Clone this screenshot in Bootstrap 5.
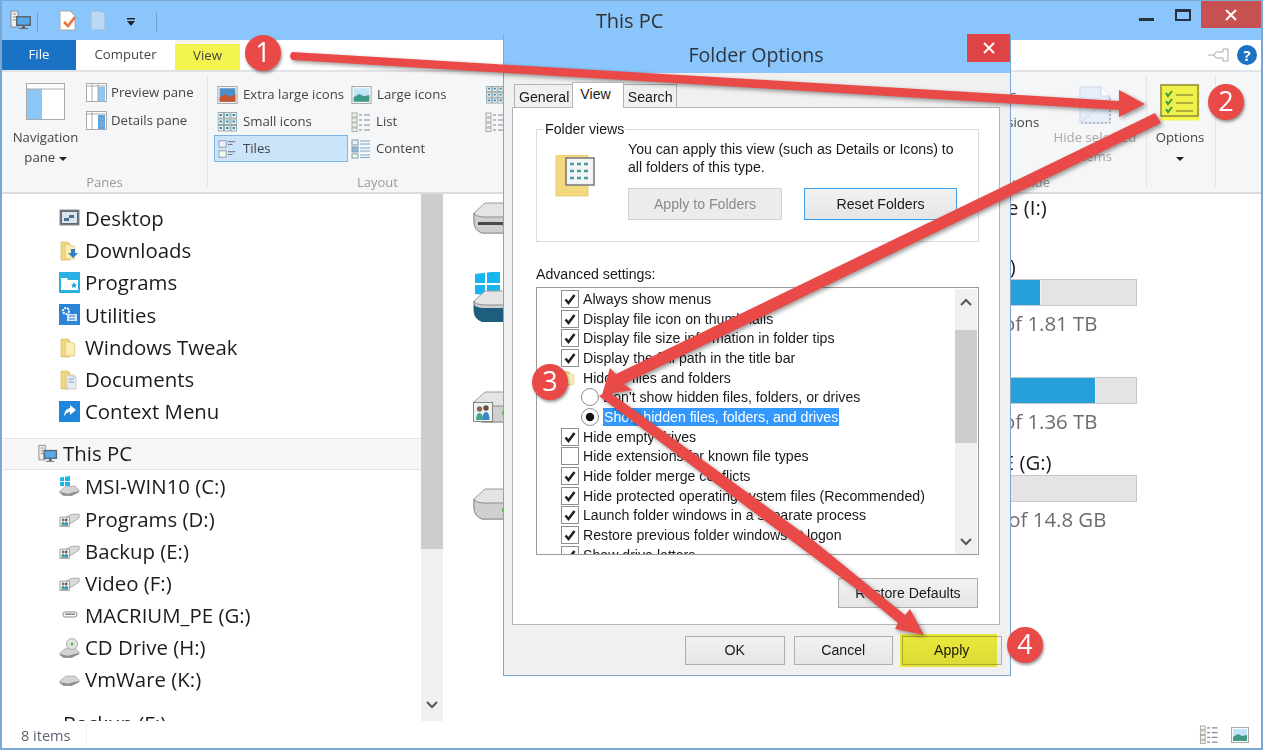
<!DOCTYPE html>
<html lang="en">
<head>
  <meta charset="UTF-8">
  <meta name="viewport" content="width=device-width, initial-scale=1.0">
  <title>Folder Options</title>
  <link rel="stylesheet" href="https://cdn.jsdelivr.net/npm/bootstrap@5.3.0/dist/css/bootstrap.min.css">
  <style>
    body { width: 1263px; height: 750px; overflow: hidden; background: #fff; font-family: "Open Sans", "Liberation Sans", sans-serif; }
    .win-frame { position: relative; width: 1263px; height: 750px; border: solid #7ba7d3; border-width: 1px 2px 2px; overflow: hidden; }

    /* title bar */
    .win-title { height: 39px; background: #8ac5fb; display: grid; grid-template-columns: 1fr auto 1fr; }
    .win-title h1 { font-size: 20px; font-weight: 400; color: #333; margin: 8px 4px 0 0; }
    .qat { padding: 9px 0 0 8px; gap: 5px; }
    .qat-sep { width: 1px; height: 20px; background: #6e9fcb; margin-top: 2px; }
    .win-btns { justify-content: flex-end; }
    .btn-min { width: 15px; height: 3px; background: #26323d; margin: 17px 21px 0 0; }
    .btn-max { width: 16px; height: 12px; border: 2px solid #26323d; border-top-width: 3px; margin: 8px 10px 0 0; }
    .btn-close-win { width: 60px; height: 27px; background: #c75050; color: #fff; display: flex; align-items: center; justify-content: center; }

    /* ribbon */
    .rb-tabs { height: 31px; background: #fff; align-items: stretch; font-size: 13.2px; }
    .rb-tab { color: #444; display: flex; align-items: center; justify-content: center; }
    .rb-file { width: 74px; background: #1a72c4; color: #fff; }
    .rb-computer { width: 99px; }
    .rb-view { width: 65px; background: #f4f44e; border-top: 4px solid #f4f6ee; color: #444; padding-bottom: 3px; }
    .rb-help { width: 20px; height: 20px; background: #1a72c4; color: #fff; font-size: 15px; font-weight: 700; line-height: 20px; }
    .rb-body { height: 125px; background: #f5f6f7; border-top: 2px solid #e2e3e4; border-bottom: 2px solid #dadbdc; font-size: 13.2px; color: #444; }
    .rb-group { position: relative; border-right: 1px solid #e2e3e4; height: 111px; margin-top: 4px; }
    .rb-label { position: absolute; bottom: -5px; left: 0; right: 0; text-align: center; color: #9a9a9a; font-size: 13px; }
    .rb-panes { width: 206px; }
    .rb-navpane { width: 84px; padding: 7px 2px 0 5px; text-align: center; line-height: 20px; }
    .rb-navpane svg { display: block; margin: 0 0 7px 19px; }
    .rb-panelist { gap: 7px; padding-top: 6px; }
    .rb-small { gap: 4px; align-items: center; height: 21px; }
    .rb-layout { width: 340px; padding: 5px 0 0 6px; }
    .rb-gallery { display: grid; grid-template-columns: 134px 134px 134px; grid-auto-rows: 27px; }
    .rb-cell { display: flex; align-items: center; gap: 5px; padding-left: 3px; white-space: nowrap; }
    .rb-cell-on { background: #cce4f9; border: 1px solid #7fb4e6; }
    .rb-showhide { width: 247px; margin-left: auto; }
    .rb-checks { position: absolute; left: 10px; top: 6px; line-height: 27px; white-space: nowrap; }
    .rb-hide { position: absolute; left: 150px; top: 10px; width: 90px; text-align: center; color: #a8a8a8; line-height: 19px; }
    .rb-options { width: 69px; margin-right: 45px; padding-right: 2px; text-align: center; line-height: 19px; }
    .rb-options svg { display: block; margin: 8px auto 7px; }
    .rb-caret { width: 0; height: 0; border: 4px solid transparent; border-top-color: #222; border-bottom: 0; display: inline-block; }

    /* main area */
    .win-main { height: 527px; background: #fff; }
    .tree { width: 419px; padding-top: 8px; overflow: hidden; font-size: 20.4px; color: #1c1c1c; flex-shrink: 0; }
    .tree-row { height: 32.2px; display: flex; align-items: center; gap: 5px; padding-left: 57px; white-space: nowrap; }
    .tree-pc { height: 32px; margin: 10px 0 1px 1px; padding-left: 35px; background: #f6f6f6; border: solid #e4e4e4; border-width: 1px 0; gap: 5px; }
    .tree-root { margin-top: 11px; padding-left: 61px; }
    .vscroll { width: 22px; background: #f0f0f0; flex-shrink: 0; }
    .vthumb { height: 355px; background: #cdcdcd; }
    .vdown { margin-top: auto; height: 32px; color: #555; display: flex; align-items: center; justify-content: center; }
    .tiles { flex-grow: 1; padding-left: 30px; font-size: 20.4px; color: #1c1c1c; }
    .tile { height: 98px; }
    .tile-first { height: 59px; }
    .tile-ic { flex-shrink: 0; }
    .ic-a { margin-top: 6px; }
    .ic-b { margin-top: 19px; }
    .ic-c { margin-top: 38px; }
    .ic-d { margin-top: 37px; }
    .tile-info { width: 251px; margin-left: auto; margin-right: 124px; line-height: 26px; white-space: nowrap; }
    .tile-name-short { padding-left: 48px; }
    .tile-bar { height: 27px; background: #e4e4e4; border: 1px solid #c8c8c8; }
    .tile-fill { height: 100%; background: #26a0da; border-right: 1px solid #e8f4fb; }
    .tile-free { color: #6d6d6d; margin-top: 4px; }
    .win-status { height: 27px; background: #fff; font-size: 14.5px; color: #5a6472; align-items: center; }
    .st-count { width: 85px; padding-left: 19px; border-right: 1px solid #f0f0f0; height: 22px; line-height: 24px; }

    /* dialog */
    .dlg { position: absolute; left: 501px; top: 33px; width: 508px; height: 642px; background: #f0f0f0; border: 1px solid #7ba7d3; border-top: 0; font-family: "Liberation Sans", Arial, sans-serif; font-size: 14.15px; color: #1a1a1a; }
    .dlg-title { height: 39px; background: #8ac5fb; text-align: center; font-family: "Open Sans", sans-serif; font-size: 19.6px; color: #2d3640; line-height: 42px; position: relative; padding-right: 2px; }
    .dlg-close { position: absolute; top: 0; right: 0; width: 43px; height: 28px; background: #e04343; display: flex; align-items: center; justify-content: center; }
    .dlg-tabs { padding: 9px 0 0 10px; height: 34px; align-items: flex-end; border: 0; flex-wrap: nowrap; }
    .dlg-tab { height: 23px; border: 1px solid #b5b5b5; border-bottom: 0; background: #f0f0f0; padding: 0 3px 0 4px; line-height: 24px; margin-left: -1px; }
    .dlg-tab-on { height: 26px; background: #fff; padding: 0 12px 0 7px; line-height: 22px; position: relative; z-index: 1; margin-bottom: -1px; }
    .dlg-pane { width: 488px; height: 518px; margin-left: 8px; background: #fff; border: 1px solid #b5b5b5; padding: 21px 20px 0 23px; }
    .dlg-views { position: relative; width: 443px; height: 113px; border: 1px solid #dcdcdc; padding: 10px 0 0 18px; }
    .dlg-legend { position: absolute; left: 7px; top: -9px; padding: 0 1px; line-height: 16px; background: #fff; }
    .dlg-views-icon { margin-top: 15px; flex-shrink: 0; }
    .dlg-text { line-height: 18px; }
    .dlg-btn { font-size: 14.15px; height: 32px; border-radius: 0; padding: 0; background: linear-gradient(#f2f2f2, #e5e5e5); border: 1px solid #adadad; color: #1a1a1a; font-family: inherit; }
    .dlg-btn-off:disabled { width: 154px; background: #ececec; border-color: #cfcfcf; color: #8a8a8a; opacity: 1; }
    .dlg-btn-focus { width: 153px; border-color: #3f9ee8; }
    .dlg-btn-gap { gap: 22px; margin-top: 12px; }
    .dlg-btn-gap .dlg-btn, .dlg-restore { padding-top: 2px; }
    .adv-label { margin: 24px 0 0; line-height: 16px; }
    .adv-list { width: 443px; height: 268px; margin-top: 5px; border: 1px solid #9a9a9a; overflow: hidden; padding: 1px 0 0 24px; position: relative; }
    .adv-row { height: 19.7px; display: flex; align-items: center; white-space: nowrap; gap: 4px; line-height: 18px; }
    .adv-sub { padding-left: 20px; }
    .adv-on { background: #3399ff; color: #fff; padding: 0 1px; }
    .adv-box { width: 18px; height: 18px; margin: 0; border: 1px solid #8f8f8f; flex-shrink: 0; background-color: #fff; }
    .adv-box[type=checkbox] { border-radius: 0; }
    .adv-box:checked { background-color: #fff; border-color: #8f8f8f; background-size: 14px; background-repeat: no-repeat; background-position: center; }
    .adv-box[type=checkbox]:checked { background-image: url("data:image/svg+xml,%3csvg xmlns='http://www.w3.org/2000/svg' viewBox='0 0 14 14'%3e%3cpath d='M2.5 7.5 5.5 11 11.5 3' fill='none' stroke='%23222' stroke-width='2.6'/%3e%3c/svg%3e"); }
    .adv-box[type=radio]:checked { background-size: 16px; background-image: url("data:image/svg+xml,%3csvg xmlns='http://www.w3.org/2000/svg' viewBox='0 0 16 16'%3e%3ccircle cx='8' cy='8' r='4.2' fill='%23111'/%3e%3c/svg%3e"); }
    .adv-scroll { position: absolute; top: 0; right: 0; bottom: 0; width: 22px; background: #f0f0f0; margin: 1px 1px 0 0; color: #555; }
    .adv-thumb { position: absolute; top: 41px; left: 0; width: 22px; height: 113px; background: #cdcdcd; }
    .adv-up, .adv-dn { position: absolute; left: 5px; }
    .adv-up { top: 9px; }
    .adv-dn { bottom: 8px; }
    .dlg-restore { width: 140px; height: 30px; margin: 23px 0 0 302px; display: block; }
    .dlg-foot { padding: 11px 0 0 181px; gap: 9px; }
    .dlg-foot .dlg-btn { width: 99.5px; height: 29px; }
    .apply-wrap { position: relative; }
    .apply-mark { position: absolute; left: -2px; top: -2px; width: 97px; height: 33px; background: #f5f53c; mix-blend-mode: multiply; }

    /* annotations on top of everything */
    .note-arrows { position: absolute; left: 0; top: 0; filter: drop-shadow(2px 2px 2px rgba(0, 0, 0, .4)); pointer-events: none; }
    .note-num { position: absolute; width: 36px; height: 36px; background: #e94a47; color: #fff; font-size: 27px; line-height: 34px; text-align: center; box-shadow: 1px 2px 3px rgba(0, 0, 0, .4); }
    .num-1 { left: 243px; top: 34px; }
    .num-2 { left: 1206px; top: 83px; }
    .num-3 { left: 530px; top: 363px; }
    .num-4 { left: 1005px; top: 626px; }
  </style>
</head>
<body class="m-0">
  <svg width="0" height="0" class="position-absolute">
    <defs>
      <symbol id="i-pc" viewBox="0 0 22 20">
        <path d="M1 1h7v16H1z" fill="#eee" stroke="#888"/>
        <path d="M3 4h3M3 7h3M3 10h3" stroke="#888"/>
        <path d="M6 6h15v10H6z" fill="#5a6672"/>
        <path d="M7.5 7.5h12v7h-12z" fill="#59a9e6"/>
        <path d="M12 16h3v2h3v1H9v-1h3z" fill="#5a6672"/>
      </symbol>
      <symbol id="i-folder" viewBox="0 0 20 20">
        <path d="M2 2h6l2 1v16H2z" fill="#f2d97e" stroke="#d8bd62" stroke-width=".8"/>
        <path d="M6 4l9 2v12H6z" fill="#fbeeb5" stroke="#d8bd62" stroke-width=".6"/>
      </symbol>
      <symbol id="i-drive-small" viewBox="0 0 22 16">
        <path d="M1 9 14 3h7v4L10 14H3z" fill="#d9d9d9" stroke="#999" stroke-width=".8"/>
        <path d="M1 6h10v10H1z" fill="#eef4f4" stroke="#888" stroke-width=".8"/>
        <circle cx="4.4" cy="9" r="1.4" fill="#8a6a50"/><circle cx="7.6" cy="9" r="1.4" fill="#6a4f3a"/>
        <path d="M2.500 15q0-4 2-4t1.500 4z" fill="#45a88a"/><path d="M6 15q0-4 1.800-4t1.700 4z" fill="#3a87c8"/>
      </symbol>
      <symbol id="i-hdd" viewBox="0 0 22 12">
        <path d="M1 7 7 2h10l4 4v2l-8 4H5L1 9z" fill="#d4d4d4" stroke="#9a9a9a" stroke-width=".7"/>
        <path d="M1 8l8 2 12-3v1l-8 4H5L1 9z" fill="#8f8f8f"/>
        <rect x="15" y="8" width="2" height="1" fill="#5bb04a"/>
      </symbol>
      <symbol id="i-big-drive" viewBox="0 0 60 34">
        <path d="M1 13 12 3h48v30H9Q1 30 1 22z" fill="#e4e4e4" stroke="#9c9c9c"/>
        <path d="M1 13q0 3 9 4h50v16H9Q1 30 1 22z" fill="#cfcfcf" stroke="#8e8e8e"/>
        <rect x="29" y="22" width="2" height="4" fill="#63b34b"/>
      </symbol>
      <symbol id="i-large-thumb" viewBox="0 0 18 16">
        <rect x=".5" y=".5" width="17" height="15" fill="#fff" stroke="#aaa"/>
        <rect x="2" y="2" width="14" height="12" fill="#bfe4f5"/>
        <path d="M2 10l5-3 4 2 5-1v6H2z" fill="#3f9a86"/>
      </symbol>
      <symbol id="i-grid3" viewBox="0 0 20 20">
        <g fill="#eef1f4" stroke="#9aa">
          <rect x=".5" y=".5" width="5.500" height="5.500"/><rect x="7" y=".5" width="5.500" height="5.500"/><rect x="13.500" y=".5" width="5.500" height="5.500"/>
          <rect x=".5" y="7" width="5.500" height="5.500"/><rect x="7" y="7" width="5.500" height="5.500"/><rect x="13.500" y="7" width="5.500" height="5.500"/>
          <rect x=".5" y="13.500" width="5.500" height="5.500"/><rect x="7" y="13.500" width="5.500" height="5.500"/><rect x="13.500" y="13.500" width="5.500" height="5.500"/>
        </g>
        <path d="M2 3h2.500M8.500 3h2.500M15 3h2.500M2 9.500h2.500M8.500 9.500h2.500M15 9.500h2.500M2 16h2.500M8.500 16h2.500M15 16h2.500" stroke="#3a8fb5" stroke-width="2"/>
      </symbol>
      <symbol id="i-list" viewBox="0 0 20 20">
        <g fill="#f4f4ee" stroke="#aaa"><rect x="1" y="1" width="5" height="4"/><rect x="1" y="6" width="5" height="4"/><rect x="1" y="11" width="5" height="4"/><rect x="1" y="16" width="5" height="3.500"/></g>
        <path d="M8 3h3M8 8h3M8 13h3M8 18h3M13 3h6M13 8h6M13 13h6M13 18h6" stroke="#7a8a9a" stroke-width="1.2"/>
      </symbol>
    </defs>
  </svg>

  <div class="win-frame d-flex flex-column">
    <header class="win-title">
      <div class="qat d-flex">
        <svg width="22" height="20"><use href="#i-pc"/></svg>
        <span class="qat-sep"></span>
        <svg class="ms-3" width="18" height="21" viewBox="0 0 18 21"><path d="M1 1h10l5 5v14H1z" fill="#fff" stroke="#aaa"/><path d="M5 12l4 4 7-9" fill="none" stroke="#e8743b" stroke-width="2.6"/></svg>
        <svg class="ms-2" width="16" height="21" viewBox="0 0 16 21"><path d="M1 1h8l6 2v17H1z" fill="#b9d9f5" stroke="#9dbcd8"/></svg>
        <svg class="ms-3 mt-2" width="8" height="9" viewBox="0 0 8 9"><path d="M0 0h8v1.500H0zM0 3h8L4 8z" fill="#222"/></svg>
        <span class="qat-sep ms-3"></span>
      </div>
      <h1>This PC</h1>
      <div class="win-btns d-flex align-items-start">
        <span class="btn-min"></span>
        <span class="btn-max"></span>
        <span class="btn-close-win"><svg width="12" height="12" viewBox="0 0 12 12"><path d="M1 1l10 10M11 1 1 11" stroke="#fff" stroke-width="2"/></svg></span>
      </div>
    </header>

    <nav class="rb-tabs d-flex">
      <span class="rb-tab rb-file">File</span>
      <span class="rb-tab rb-computer">Computer</span>
      <span class="rb-tab rb-view">View</span>
      <span class="ms-auto d-flex align-items-center me-1 gap-2">
        <svg width="22" height="14" viewBox="0 0 22 14"><path d="M1 7H7L9 4H16V1H21V13H16V10H9L7 7" fill="#fff" stroke="#aaa"/></svg>
        <span class="rb-help rounded-circle text-center">?</span>
      </span>
    </nav>

    <section class="rb-body d-flex">
      <div class="rb-group rb-panes d-flex">
        <div class="rb-navpane">
          <svg width="39" height="37" viewBox="0 0 39 37"><rect x=".5" y=".5" width="38" height="36" fill="#fff" stroke="#aaa"/><rect x="1" y="6" width="15" height="30" fill="#8cc6f4"/><path d="M1 6h37" stroke="#aaa"/></svg>
          Navigation<br>pane <span class="rb-caret align-middle"></span>
        </div>
        <div class="rb-panelist d-flex flex-column">
          <div class="rb-small d-flex"><svg width="21" height="19" viewBox="0 0 21 19"><rect x=".5" y=".5" width="20" height="18" fill="#fff" stroke="#aaa"/><rect x="12" y="4" width="7" height="14" fill="#8cc6f4"/><path d="M6 1v17M12 1v17M1 3h19" stroke="#aaa"/></svg>Preview pane</div>
          <div class="rb-small d-flex"><svg width="21" height="19" viewBox="0 0 21 19"><rect x=".5" y=".5" width="20" height="18" fill="#fff" stroke="#aaa"/><rect x="12" y="4" width="7" height="14" fill="#5aa5e6"/><path d="M6 1v17M1 3h19M14 8h4M14 11h4M14 14h4" stroke="#aaa"/></svg>Details pane</div>
        </div>
        <div class="rb-label">Panes</div>
      </div>

      <div class="rb-group rb-layout">
        <div class="rb-gallery">
          <div class="rb-cell"><svg width="21" height="18" viewBox="0 0 18 16"><rect x=".5" y=".5" width="17" height="15" fill="#fff" stroke="#aaa"/><rect x="2" y="2" width="14" height="12" fill="#4d8ec9"/><path d="M2 10l5-3 4 3 5-3v7H2z" fill="#c8552b"/></svg>Extra large icons</div>
          <div class="rb-cell"><svg width="21" height="18"><use href="#i-large-thumb"/></svg>Large icons</div>
          <div class="rb-cell"><svg width="20" height="18"><use href="#i-grid3"/></svg></div>
          <div class="rb-cell"><svg width="21" height="20" viewBox="0 0 20 20"><use href="#i-grid3"/></svg>Small icons</div>
          <div class="rb-cell"><svg width="20" height="20"><use href="#i-list"/></svg>List</div>
          <div class="rb-cell"><svg width="20" height="20"><use href="#i-list"/></svg></div>
          <div class="rb-cell rb-cell-on"><svg width="20" height="20" viewBox="0 0 22 20"><rect x="1" y="1" width="8" height="7" fill="#eef" stroke="#89a"/><rect x="1" y="12" width="8" height="7" fill="#efe" stroke="#89a"/><path d="M11 2h8M11 5h5M11 13h8M11 16h5" stroke="#667"/></svg>Tiles</div>
          <div class="rb-cell"><svg width="20" height="20" viewBox="0 0 20 20"><rect x="1" y="1" width="6" height="5" fill="#eef" stroke="#89a"/><rect x="1" y="8" width="6" height="5" fill="#8bd" stroke="#89a"/><rect x="1" y="15" width="6" height="4" fill="#efe" stroke="#89a"/><path d="M9 2h10M9 5h10M9 9h10M9 12h10M9 16h10M9 18.500h10" stroke="#7aa5cc"/></svg>Content</div>
          <div class="rb-cell"></div>
        </div>
        <div class="rb-label">Layout</div>
      </div>

      <div class="rb-group rb-showhide">
        <div class="rb-checks">Item check boxes<br>File name extensions</div>
        <div class="rb-hide">
          <svg width="32" height="38" viewBox="0 0 32 38" class="d-block mx-auto mb-1"><path d="M1 1h21l9 9v27H1z" fill="#e6eff9" stroke="#cfd9e4"/><path d="M22 1v9h9" fill="#fff" stroke="#cfd9e4"/><path d="M1 37 31 10" stroke="#cfd9e4"/><path d="M31 12v25H3" fill="none" stroke="#8c97a3" stroke-dasharray="2 2"/></svg>
          Hide selected<br>items
        </div>
        <div class="rb-label text-end pe-5 me-5">Show/hide</div>
      </div>

      <div class="rb-group rb-options">
        <svg width="40" height="37" viewBox="0 0 40 37">
          <rect x=".5" y=".5" width="39" height="36" fill="#f5f54e"/>
          <rect x="1" y="1" width="37" height="31" fill="#f0f04a" stroke="#8a8a3a" stroke-width="1.500"/>
          <path d="M6 9l2 3 4-5M6 17l2 3 4-5M6 25l2 3 4-5" fill="none" stroke="#3a9a3a" stroke-width="2"/>
          <path d="M16 11h17M16 19h17M16 27h17" stroke="#6a6a2a" stroke-width="1.2"/>
        </svg>
        Options<br><span class="rb-caret"></span>
      </div>
    </section>

    <main class="win-main d-flex flex-grow-1">
      <div class="tree">
        <div class="tree-row"><svg width="21" height="21" viewBox="0 0 21 21"><rect x="1" y="2" width="19" height="15" fill="#5e6c7a" stroke="#8a8a8a"/><rect x="3" y="4" width="15" height="11" fill="#dbe3ec"/><path d="M5 10h5v3H5zM10 7h5v3h-5z" fill="#4b6f93"/></svg>Desktop</div>
        <div class="tree-row"><svg width="21" height="21" viewBox="0 0 21 21"><use href="#i-folder"/><path d="M12 9h4v4h3l-5 5-5-5h3z" fill="#2c7fc9"/></svg>Downloads</div>
        <div class="tree-row"><svg width="21" height="21" viewBox="0 0 21 21"><rect width="21" height="21" fill="#2ab0e2"/><path d="M2 6h6l1 2h10v10H2z" fill="#fff"/><path d="M15 10l1 2.200 2 .2-1.500 1.500.5 2.200-2-1.100-2 1.100.5-2.200-1.500-1.500 2-.2z" fill="#2a9fe0"/></svg>Programs</div>
        <div class="tree-row"><svg width="21" height="21" viewBox="0 0 21 21"><rect width="21" height="21" fill="#2b84d6"/><circle cx="7" cy="7" r="3" fill="none" stroke="#fff" stroke-width="2" stroke-dasharray="2 1"/><path d="M8 10h10v7H8z" fill="#d8e8f7"/><path d="M10 12h6M10 15h6" stroke="#2b84d6"/></svg>Utilities</div>
        <div class="tree-row"><svg width="21" height="21" viewBox="0 0 21 21"><use href="#i-folder"/></svg>Windows Tweak</div>
        <div class="tree-row"><svg width="21" height="21" viewBox="0 0 21 21"><use href="#i-folder"/><path d="M8 6l9 2v12H8z" fill="#e8edf2" stroke="#a9b4bf" stroke-width=".6"/><path d="M10 10h5M10 13h5" stroke="#7aa0c4"/></svg>Documents</div>
        <div class="tree-row"><svg width="21" height="21" viewBox="0 0 21 21"><rect width="21" height="21" fill="#1f86dd"/><path d="M11 4l6 5-6 5v-3q-4 0-6 5 0-8 6-9z" fill="#fff"/></svg>Context Menu</div>
        <div class="tree-row tree-pc"><svg width="20" height="19"><use href="#i-pc"/></svg>This PC</div>
        <div class="tree-row"><svg width="21" height="21" viewBox="0 0 21 21"><path d="M1 1.500 5 1v4H1zM6 .8 11 0v5H6zM1 6h4v4H1zM6 6h5v4.800L6 10z" fill="#18b5ee"/><use href="#i-hdd" y="8" width="21" height="12"/></svg>MSI-WIN10 (C:)</div>
        <div class="tree-row"><svg width="21" height="16"><use href="#i-drive-small"/></svg>Programs (D:)</div>
        <div class="tree-row"><svg width="21" height="16"><use href="#i-drive-small"/></svg>Backup (E:)</div>
        <div class="tree-row"><svg width="21" height="16"><use href="#i-drive-small"/></svg>Video (F:)</div>
        <div class="tree-row"><svg width="21" height="8" viewBox="0 0 21 8"><rect x="4" y="1" width="14" height="5" rx="2" fill="#fff" stroke="#888"/><rect x="6" y="2.500" width="10" height="1.500" fill="#888"/></svg>MACRIUM_PE (G:)</div>
        <div class="tree-row"><svg width="21" height="20" viewBox="0 0 21 20"><use href="#i-hdd" y="8" width="21" height="12"/><circle cx="13" cy="6" r="5.500" fill="#dfe6e4" stroke="#999" stroke-width=".8"/><circle cx="13" cy="6" r="1.500" fill="#5bb04a"/></svg>CD Drive (H:)</div>
        <div class="tree-row"><svg width="21" height="12"><use href="#i-hdd"/></svg>VmWare (K:)</div>
        <div class="tree-row tree-root">Backup (F:)</div>
      </div>

      <div class="vscroll d-flex flex-column">
        <div class="vthumb"></div>
        <div class="vdown"><svg width="12" height="8" viewBox="0 0 12 8"><path d="M1 1l5 5 5-5" fill="none" stroke="#555" stroke-width="2"/></svg></div>
      </div>

      <div class="tiles">
        <div class="tile tile-first d-flex">
          <svg class="tile-ic ic-a" width="60" height="34" viewBox="0 0 60 34"><use href="#i-big-drive"/><path d="M5 22h25v3H5z" fill="#4a4a4a"/></svg>
          <div class="tile-info tile-name-short">Software (I:)</div>
        </div>
        <div class="tile d-flex">
          <svg class="tile-ic ic-b" width="60" height="50" viewBox="0 0 60 50">
            <path d="M2 2 12 .8V11H2zM14 .6 27 -1v12H14zM2 13h10v10L2 22zM14 13h13v12l-13-1.500z" fill="#18b5ee"/>
            <use href="#i-big-drive" y="16" width="60" height="34"/>
            <path d="M1 32q0 3 9 4h50v14H9q-8-3-8-11z" fill="#1d5d7d"/>
          </svg>
          <div class="tile-info">Programs (D:)
            <div class="tile-bar"><div class="tile-fill" style="width: 61.7%"></div></div>
            <div class="tile-free">702 GB free of 1.81 TB</div>
          </div>
        </div>
        <div class="tile d-flex">
          <svg class="tile-ic ic-c" width="60" height="36" viewBox="0 0 60 36">
            <use href="#i-big-drive" x="0" width="60" height="34"/>
            <rect x=".5" y="13.500" width="19" height="19" fill="#eef4f4" stroke="#808080"/>
            <circle cx="6.500" cy="20" r="2.700" fill="#8a6a50"/><circle cx="13" cy="19" r="2.700" fill="#6a4f3a"/>
            <path d="M3 31q0-7 3.500-7t3.500 7z" fill="#45a88a"/><path d="M9.500 31q0-8 3.500-8t3.500 8z" fill="#3a87c8"/>
          </svg>
          <div class="tile-info">Backup (E:)
            <div class="tile-bar"><div class="tile-fill" style="width: 84%"></div></div>
            <div class="tile-free">236 GB free of 1.36 TB</div>
          </div>
        </div>
        <div class="tile d-flex">
          <svg class="tile-ic ic-d" width="60" height="34"><use href="#i-big-drive"/></svg>
          <div class="tile-info">MACRIUM_PE (G:)
            <div class="tile-bar"></div>
            <div class="tile-free">14.7 GB free of 14.8 GB</div>
          </div>
        </div>
      </div>
    </main>

    <footer class="win-status d-flex">
      <div class="st-count">8 items</div>
      <div class="ms-auto d-flex align-items-center gap-2 me-2 pe-1">
        <svg width="20" height="19"><use href="#i-list"/></svg>
        <svg class="ms-1" width="18" height="16"><use href="#i-large-thumb"/></svg>
      </div>
    </footer>

    <div class="dlg d-flex flex-column">
      <div class="dlg-title">Folder Options
        <span class="dlg-close"><svg width="12" height="12" viewBox="0 0 12 12"><path d="M1 1l10 10M11 1 1 11" stroke="#fff" stroke-width="2"/></svg></span>
      </div>
      <div class="dlg-tabs d-flex">
        <span class="dlg-tab ms-0">General</span>
        <span class="dlg-tab dlg-tab-on">View</span>
        <span class="dlg-tab">Search</span>
      </div>
      <div class="dlg-pane">
        <div class="dlg-views d-flex">
          <span class="dlg-legend">Folder views</span>
          <svg class="dlg-views-icon" width="73" height="42" viewBox="0 0 73 42">
            <path d="M1 0h32v41H1z" fill="#f2d97e" stroke="#e3c868" stroke-width=".8"/>
            <rect x="11" y="3" width="28" height="27" fill="#f4f4f4" stroke="#777" stroke-width="1.500"/>
            <path d="M15 9h4M22 9h4M29 9h4M15 16h4M22 16h4M29 16h4M15 23h4M22 23h4M29 23h4" stroke="#4b9a9a" stroke-width="2.500"/>
          </svg>
          <div>
            <div class="dlg-text">You can apply this view (such as Details or Icons) to<br>all folders of this type.</div>
            <div class="dlg-btn-gap d-flex">
              <button class="btn dlg-btn dlg-btn-off" disabled>Apply to Folders</button>
              <button class="btn dlg-btn dlg-btn-focus">Reset Folders</button>
            </div>
          </div>
        </div>
        <p class="adv-label">Advanced settings:</p>
        <div class="adv-list">
          <label class="adv-row"><input class="form-check-input adv-box" type="checkbox" checked>Always show menus</label>
          <label class="adv-row"><input class="form-check-input adv-box" type="checkbox" checked>Display file icon on thumbnails</label>
          <label class="adv-row"><input class="form-check-input adv-box" type="checkbox" checked>Display file size information in folder tips</label>
          <label class="adv-row"><input class="form-check-input adv-box" type="checkbox" checked>Display the full path in the title bar</label>
          <div class="adv-row"><svg width="18" height="16"><use href="#i-folder"/></svg>Hidden files and folders</div>
          <label class="adv-row adv-sub"><input class="form-check-input adv-box" type="radio" name="hid">Don't show hidden files, folders, or drives</label>
          <label class="adv-row adv-sub"><input class="form-check-input adv-box" type="radio" name="hid" checked><span class="adv-on">Show hidden files, folders, and drives</span></label>
          <label class="adv-row"><input class="form-check-input adv-box" type="checkbox" checked>Hide empty drives</label>
          <label class="adv-row"><input class="form-check-input adv-box" type="checkbox">Hide extensions for known file types</label>
          <label class="adv-row"><input class="form-check-input adv-box" type="checkbox" checked>Hide folder merge conflicts</label>
          <label class="adv-row"><input class="form-check-input adv-box" type="checkbox" checked>Hide protected operating system files (Recommended)</label>
          <label class="adv-row"><input class="form-check-input adv-box" type="checkbox" checked>Launch folder windows in a separate process</label>
          <label class="adv-row"><input class="form-check-input adv-box" type="checkbox" checked>Restore previous folder windows at logon</label>
          <label class="adv-row"><input class="form-check-input adv-box" type="checkbox" checked>Show drive letters</label>
          <div class="adv-scroll">
            <div class="adv-thumb"></div>
            <svg class="adv-up" width="12" height="8" viewBox="0 0 12 8"><path d="M1 7l5-5 5 5" fill="none" stroke="#555" stroke-width="2"/></svg>
            <svg class="adv-dn" width="12" height="8" viewBox="0 0 12 8"><path d="M1 1l5 5 5-5" fill="none" stroke="#555" stroke-width="2"/></svg>
          </div>
        </div>
        <button class="btn dlg-btn dlg-restore">Restore Defaults</button>
      </div>
      <div class="dlg-foot d-flex">
        <button class="btn dlg-btn">OK</button>
        <button class="btn dlg-btn">Cancel</button>
        <div class="apply-wrap"><button class="btn dlg-btn">Apply</button><span class="apply-mark"></span></div>
      </div>
    </div>

    <svg class="note-arrows" width="1263" height="750" viewBox="0 0 1263 750">
      <g fill="#e94a47" stroke="none">
        <path d="M290 51 1117 100V89L1143 103 1117 116V109L290 59Q286 55 290 51Z"/>
        <path d="M1153 112 1159 122 622 383 630 389 600 394 608 367 614 373Z"/>
        <path d="M597 395 606 390 812 540 877 593 903 614 908 608 922 634 893 628 896 622 861 593 790 540Z"/>
      </g>
    </svg>
    <div class="note-num num-1 rounded-circle">1</div>
    <div class="note-num num-2 rounded-circle">2</div>
    <div class="note-num num-3 rounded-circle">3</div>
    <div class="note-num num-4 rounded-circle">4</div>
  </div>

  <script src="https://cdn.jsdelivr.net/npm/bootstrap@5.3.0/dist/js/bootstrap.bundle.min.js"></script>
</body>
</html>
